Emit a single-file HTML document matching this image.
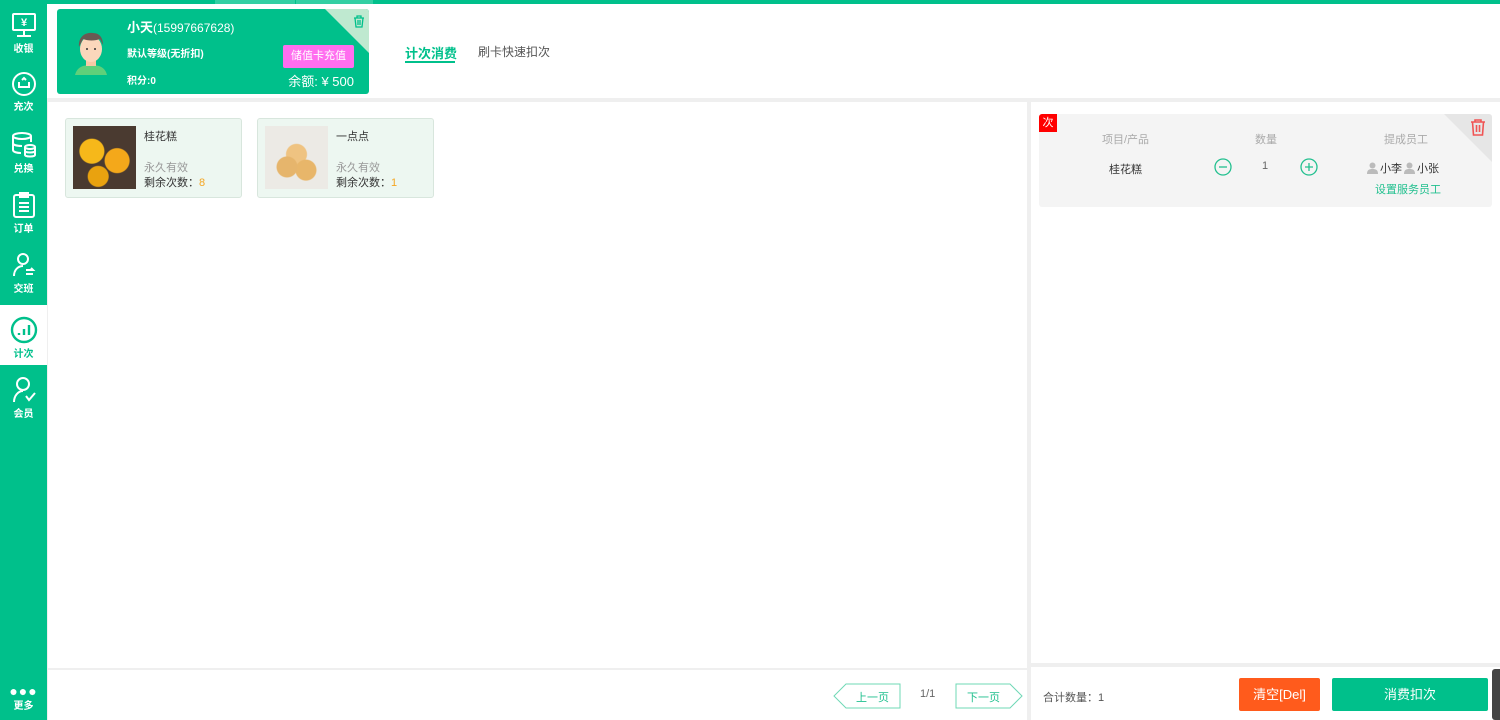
<!DOCTYPE html>
<html><head><meta charset="utf-8"><style>
*{margin:0;padding:0;box-sizing:border-box}
body{width:1500px;height:720px;overflow:hidden;background:#efefef;font-family:"Liberation Sans","Noto Sans CJK SC",sans-serif;position:relative;font-size:12px;color:#333}
.abs{position:absolute}
.side{left:0;top:0;width:47px;height:720px;background:#00c08b}
.si{position:absolute;left:0;width:47px;height:60px;color:#fff;text-align:center;font-size:10px;font-weight:bold}
.si svg{display:block;margin:11px auto 1px}
.si.act{background:#fff;color:#00c08b}
.card{left:57px;top:9px;width:312px;height:85px;background:#00c08b;border-radius:3px;color:#fff;overflow:hidden}
.prod{position:absolute;top:118px;width:177px;height:80px;background:#edf7f1;border:1px solid #d8e6dd;border-radius:3px}
.prod .img{position:absolute;left:7px;top:7px;width:63px;height:63px}
.prod .t{position:absolute;left:78px;top:9px;font-size:11px;color:#333}
.prod .v{position:absolute;left:78px;top:40px;font-size:11px;color:#999}
.prod .n{position:absolute;left:78px;top:55px;font-size:11px;color:#333}
</style></head><body>
<div class="abs" style="left:0;top:0;width:1500px;height:4px;background:#00c08b"></div>
<div class="abs" style="left:215px;top:0;width:80px;height:4px;background:#33cfa3"></div>
<div class="abs" style="left:296px;top:0;width:77px;height:4px;background:#33cfa3"></div>
<div class="abs" style="left:47px;top:4px;width:1453px;height:94px;background:#fff"></div>
<div class="abs" style="left:48px;top:102px;width:979px;height:566px;background:#fff"></div>
<div class="abs" style="left:48px;top:670px;width:979px;height:50px;background:#fff"></div>
<div class="abs" style="left:1031px;top:102px;width:469px;height:561px;background:#fff"></div>
<div class="abs" style="left:1031px;top:667px;width:469px;height:53px;background:#fff"></div>

<div class="abs side">
 <div class="si" style="top:0"><svg width="26" height="28" viewBox="0 0 26 28" fill="none" stroke="#fff" stroke-width="2"><rect x="2" y="3" width="22" height="16" rx="1"/><path d="M13 19v5M6 25h14"/><text x="13" y="15" fill="#fff" stroke="none" font-size="11" text-anchor="middle" font-weight="bold">¥</text></svg>收银</div>
 <div class="si" style="top:60px"><svg width="26" height="26" viewBox="0 0 26 26" fill="none" stroke="#fff" stroke-width="2"><circle cx="13" cy="13" r="11"/><path d="M8 11v5h10v-5M11 9l2-2 2 2"/></svg>充次</div>
 <div class="si" style="top:120px"><svg width="26" height="28" viewBox="0 0 26 28" fill="none" stroke="#fff" stroke-width="2"><ellipse cx="11" cy="5" rx="9" ry="3"/><path d="M2 5v14c0 2 4 3 8 3M20 5v6"/><path d="M2 12c0 2 4 3 9 3"/><ellipse cx="19" cy="16" rx="5" ry="2"/><path d="M14 16v8c0 2 10 2 10 0v-8M14 20c0 2 10 2 10 0"/></svg>兑换</div>
 <div class="si" style="top:180px"><svg width="24" height="28" viewBox="0 0 24 28" fill="none" stroke="#fff" stroke-width="2"><rect x="2" y="4" width="20" height="22" rx="2"/><path d="M8 2h8v4H8zM7 12h10M7 16h10M7 20h10"/></svg>订单</div>
 <div class="si" style="top:240px"><svg width="26" height="28" viewBox="0 0 26 28" fill="none" stroke="#fff" stroke-width="2"><circle cx="12" cy="8" r="5"/><path d="M3 25c0-6 4-10 9-10M15 19h7l-2-2M22 23h-7"/></svg>交班</div>
 <div class="si act" style="top:305px"><svg width="28" height="28" viewBox="0 0 28 28" fill="none" stroke="#00c08b" stroke-width="2.4"><circle cx="14" cy="14" r="12"/><path d="M9 19v-2M14 19v-6M19 19v-10"/></svg>计次</div>
 <div class="si" style="top:365px"><svg width="26" height="28" viewBox="0 0 26 28" fill="none" stroke="#fff" stroke-width="2"><circle cx="12" cy="8" r="6"/><path d="M3 26c0-6 4-11 9-11M15 20l3 4 6-7"/></svg>会员</div>
 <div class="si" style="top:685px;height:35px"><div style="letter-spacing:1px;font-size:14px;line-height:12px">●●●</div>更多</div>
</div>

<div class="abs card">
 <div class="abs" style="right:0;top:0;width:0;height:0;border-top:44px solid #bfe9d0;border-left:44px solid transparent"></div>
 <svg class="abs" style="right:4px;top:6px" width="12" height="13" viewBox="0 0 12 13" fill="none" stroke="#00c08b" stroke-width="1.3"><path d="M1 3h10M4 3V1h4v2M2 3l1 9h6l1-9M5 5v5M7 5v5"/></svg>
 <svg class="abs" style="left:14px;top:16px" width="40" height="50" viewBox="0 0 40 50"><path d="M4 50c2-8 8-10 16-10s14 2 16 10z" fill="#5fd07a"/><rect x="15" y="33" width="10" height="8" fill="#f7c9a5"/><ellipse cx="20" cy="24" rx="11" ry="13" fill="#fbd7bb"/><path d="M8 22c-1-10 6-15 14-14 6 0 10 4 10 12l-3-6c-5 2-12 2-17 0z" fill="#6a5a53"/><circle cx="16" cy="24" r="1" fill="#333"/><circle cx="24" cy="24" r="1" fill="#333"/></svg>
 <div class="abs" style="left:70px;top:8px;font-size:12px"><b style="font-size:13px">小天</b>(15997667628)</div>
 <div class="abs" style="left:70px;top:36px;font-size:10px;font-weight:bold">默认等级(无折扣)</div>
 <div class="abs" style="left:70px;top:63px;font-size:10px;font-weight:bold">积分:0</div>
 <div class="abs" style="left:226px;top:36px;width:71px;height:23px;background:#ff6eef;border-radius:2px;font-size:11px;line-height:23px;text-align:center">储值卡充值</div>
 <div class="abs" style="right:15px;top:62px;font-size:13px">余额: ¥ 500</div>
</div>
<div class="abs" style="left:405px;top:43px;font-size:13px;color:#00c08b;font-weight:bold">计次消费</div>
<div class="abs" style="left:405px;top:61px;width:50px;height:2px;background:#00c08b"></div>
<div class="abs" style="left:478px;top:43px;font-size:12px;color:#555">刷卡快速扣次</div>

<div class="prod" style="left:65px"><div class="img" style="background:radial-gradient(circle at 30% 40%,#f6b81a 0 12px,transparent 13px),radial-gradient(circle at 70% 55%,#f4a81a 0 12px,transparent 13px),radial-gradient(circle at 40% 80%,#e9a20f 0 10px,transparent 11px),#4a3a30"></div><div class="t">桂花糕</div><div class="v">永久有效</div><div class="n">剩余次数：<span style="color:#f5a623">8</span></div></div>
<div class="prod" style="left:257px"><div class="img" style="background:radial-gradient(circle at 35% 65%,#e6b56c 0 10px,transparent 11px),radial-gradient(circle at 65% 70%,#e8b66a 0 10px,transparent 11px),radial-gradient(circle at 50% 45%,#efc381 0 10px,transparent 11px),#eceae5"></div><div class="t">一点点</div><div class="v">永久有效</div><div class="n">剩余次数：<span style="color:#f5a623">1</span></div></div>

<div class="abs" style="left:1039px;top:114px;width:453px;height:93px;background:#f4f4f4;border-radius:3px;overflow:hidden">
 <div class="abs" style="right:0;top:0;width:0;height:0;border-top:48px solid #e6e6e6;border-left:48px solid transparent"></div>
 <div class="abs" style="left:0;top:0;width:18px;height:18px;background:#f00;color:#fff;font-size:11px;text-align:center;line-height:18px">次</div>
 <svg class="abs" style="right:6px;top:5px" width="16" height="17" viewBox="0 0 16 17" fill="none" stroke="#f05454" stroke-width="1.6"><path d="M1 3h14M5 3V1h6v2M2.5 3l1 13h9l1-13M6.5 6v7M9.5 6v7"/></svg>
 <div class="abs" style="left:63px;top:17px;color:#aaa;font-size:11px">项目/产品</div>
 <div class="abs" style="left:216px;top:17px;color:#aaa;font-size:11px">数量</div>
 <div class="abs" style="left:345px;top:17px;color:#aaa;font-size:11px">提成员工</div>
 <div class="abs" style="left:70px;top:47px;font-size:11px">桂花糕</div>
 <svg class="abs" style="left:175px;top:44px" width="18" height="18" viewBox="0 0 18 18" fill="none" stroke="#22c08f" stroke-width="1.3"><circle cx="9" cy="9" r="8"/><path d="M5 9h8"/></svg>
 <div class="abs" style="left:223px;top:46px;font-size:11px;color:#666">1</div>
 <svg class="abs" style="left:261px;top:44px" width="18" height="18" viewBox="0 0 18 18" fill="none" stroke="#22c08f" stroke-width="1.3"><circle cx="9" cy="9" r="8"/><path d="M5 9h8M9 5v8"/></svg>
 <div class="abs" style="left:328px;top:46px;font-size:11px;display:flex;align-items:center">
  <svg width="11" height="12" viewBox="0 0 11 12"><circle cx="5.5" cy="3.5" r="3" fill="#bbb"/><path d="M0 12c0-4 2-5 5.5-5S11 8 11 12z" fill="#bbb"/></svg><span style="margin:0 2px">小李</span>
  <svg width="11" height="12" viewBox="0 0 11 12"><circle cx="5.5" cy="3.5" r="3" fill="#bbb"/><path d="M0 12c0-4 2-5 5.5-5S11 8 11 12z" fill="#bbb"/></svg><span style="margin-left:2px">小张</span></div>
 <div class="abs" style="left:336px;top:67px;font-size:11px;color:#22c08f">设置服务员工</div>
</div>

<svg class="abs" style="left:833px;top:683px" width="70" height="26" viewBox="0 0 70 26" fill="none" stroke="#6fd8b6"><path d="M13 1h54v24H13L1 13z"/></svg>
<div class="abs" style="left:856px;top:689px;font-size:11px;color:#22c08f">上一页</div>
<div class="abs" style="left:920px;top:688px;font-size:11px;color:#666">1/1</div>
<svg class="abs" style="left:955px;top:683px" width="70" height="26" viewBox="0 0 70 26" fill="none" stroke="#6fd8b6"><path d="M1 1h54l12 12-12 12H1z"/></svg>
<div class="abs" style="left:967px;top:689px;font-size:11px;color:#22c08f">下一页</div>

<div class="abs" style="left:1043px;top:689px;font-size:11px;color:#555">合计数量：1</div>
<div class="abs" style="left:1239px;top:678px;width:81px;height:33px;background:#ff5b1c;color:#fff;font-size:13px;line-height:33px;text-align:center;border-radius:2px">清空[Del]</div>
<div class="abs" style="left:1332px;top:678px;width:156px;height:33px;background:#00c08b;color:#fff;font-size:13px;line-height:33px;text-align:center;border-radius:2px">消费扣次</div>
<div class="abs" style="left:1492px;top:669px;width:8px;height:51px;background:#444;border-radius:3px 0 0 3px"></div>
</body></html>
